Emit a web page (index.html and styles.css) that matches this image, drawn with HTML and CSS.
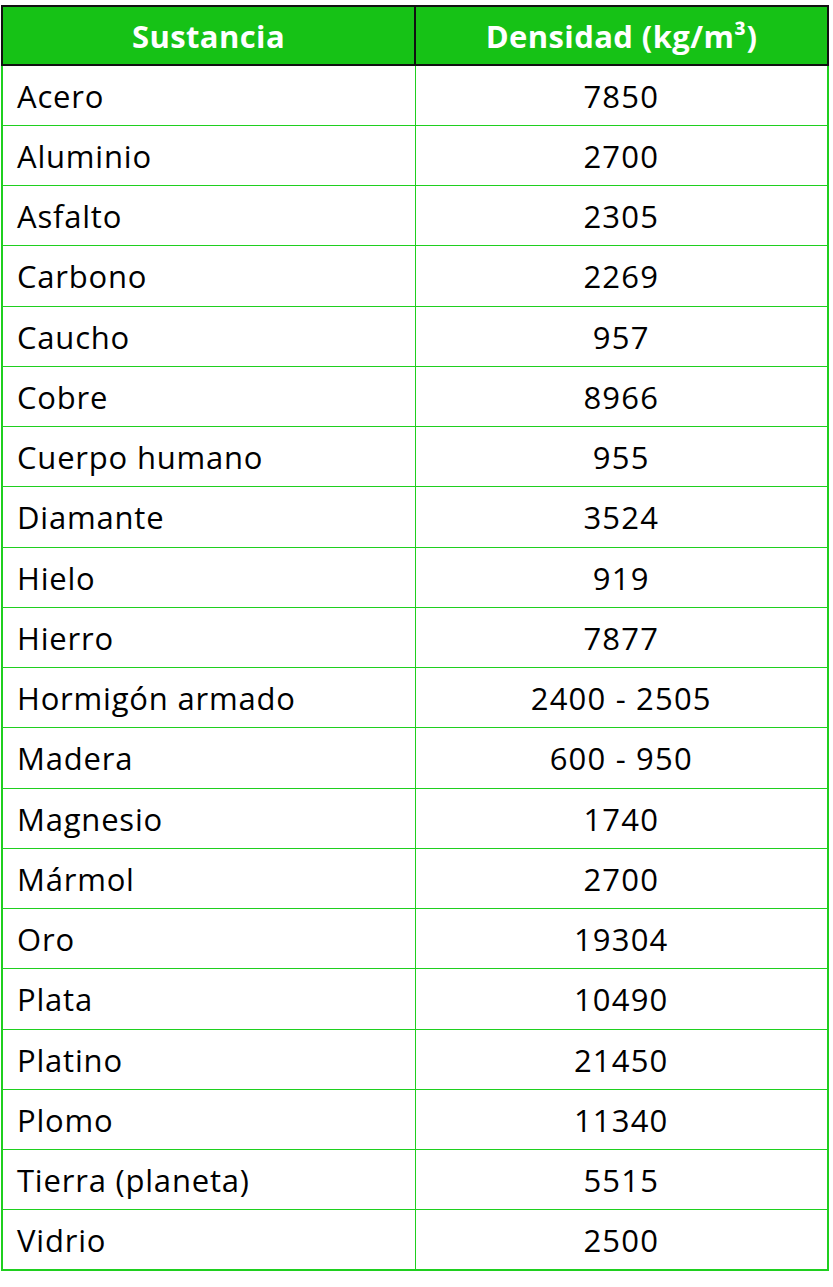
FILE: index.html
```html
<!DOCTYPE html>
<html lang="es">
<head>
<meta charset="utf-8">
<link rel="stylesheet" href="styles.css">
</head>
<body>
<table class="density">
  <thead>
    <tr><th>Sustancia</th><th>Densidad (kg/m³)</th></tr>
  </thead>
  <tbody>
    <tr><td>Acero</td><td>7850</td></tr>
    <tr><td>Aluminio</td><td>2700</td></tr>
    <tr><td>Asfalto</td><td>2305</td></tr>
    <tr><td>Carbono</td><td>2269</td></tr>
    <tr><td>Caucho</td><td>957</td></tr>
    <tr><td>Cobre</td><td>8966</td></tr>
    <tr><td>Cuerpo humano</td><td>955</td></tr>
    <tr><td>Diamante</td><td>3524</td></tr>
    <tr><td>Hielo</td><td>919</td></tr>
    <tr><td>Hierro</td><td>7877</td></tr>
    <tr><td>Hormigón armado</td><td>2400 - 2505</td></tr>
    <tr><td>Madera</td><td>600 - 950</td></tr>
    <tr><td>Magnesio</td><td>1740</td></tr>
    <tr><td>Mármol</td><td>2700</td></tr>
    <tr><td>Oro</td><td>19304</td></tr>
    <tr><td>Plata</td><td>10490</td></tr>
    <tr><td>Platino</td><td>21450</td></tr>
    <tr><td>Plomo</td><td>11340</td></tr>
    <tr><td>Tierra (planeta)</td><td>5515</td></tr>
    <tr><td>Vidrio</td><td>2500</td></tr>
  </tbody>
</table>
</body>
</html>
```
FILE: styles.css
```css
html, body {
  margin: 0;
  padding: 0;
  background: #ffffff;
}
body {
  padding: 5px 0 0 1px;
  font-family: "Open Sans", Lato, sans-serif;
}
.density {
  border-collapse: collapse;
  width: 828px;
  table-layout: fixed;
}
.density th {
  background: #16c216;
  color: #ffffff;
  font-weight: 700;
  font-size: 31px;
  letter-spacing: 0.4px;
  height: 55px;
  border: 2px solid #111111;
  text-align: center;
  padding: 2px 0 0 0;
  width: 50%;
  line-height: 1;
}
.density td {
  border: 1px solid #1fcf1f;
  height: 60.25px;
  padding: 2px 0 0 14px;
  font-size: 31px;
  letter-spacing: 0.8px;
  line-height: 1;
  color: #000000;
  text-align: left;
  box-sizing: border-box;
}
.density td + td {
  text-align: center;
  letter-spacing: 1.2px;
  padding: 2px 0 0 0;
}
.density tbody tr td:first-child {
  border-left: 2px solid #1fcf1f;
}
.density tbody tr td:last-child {
  border-right: 2px solid #1fcf1f;
}
.density tbody tr:last-child td {
  border-bottom: 2px solid #1fcf1f;
}
```
